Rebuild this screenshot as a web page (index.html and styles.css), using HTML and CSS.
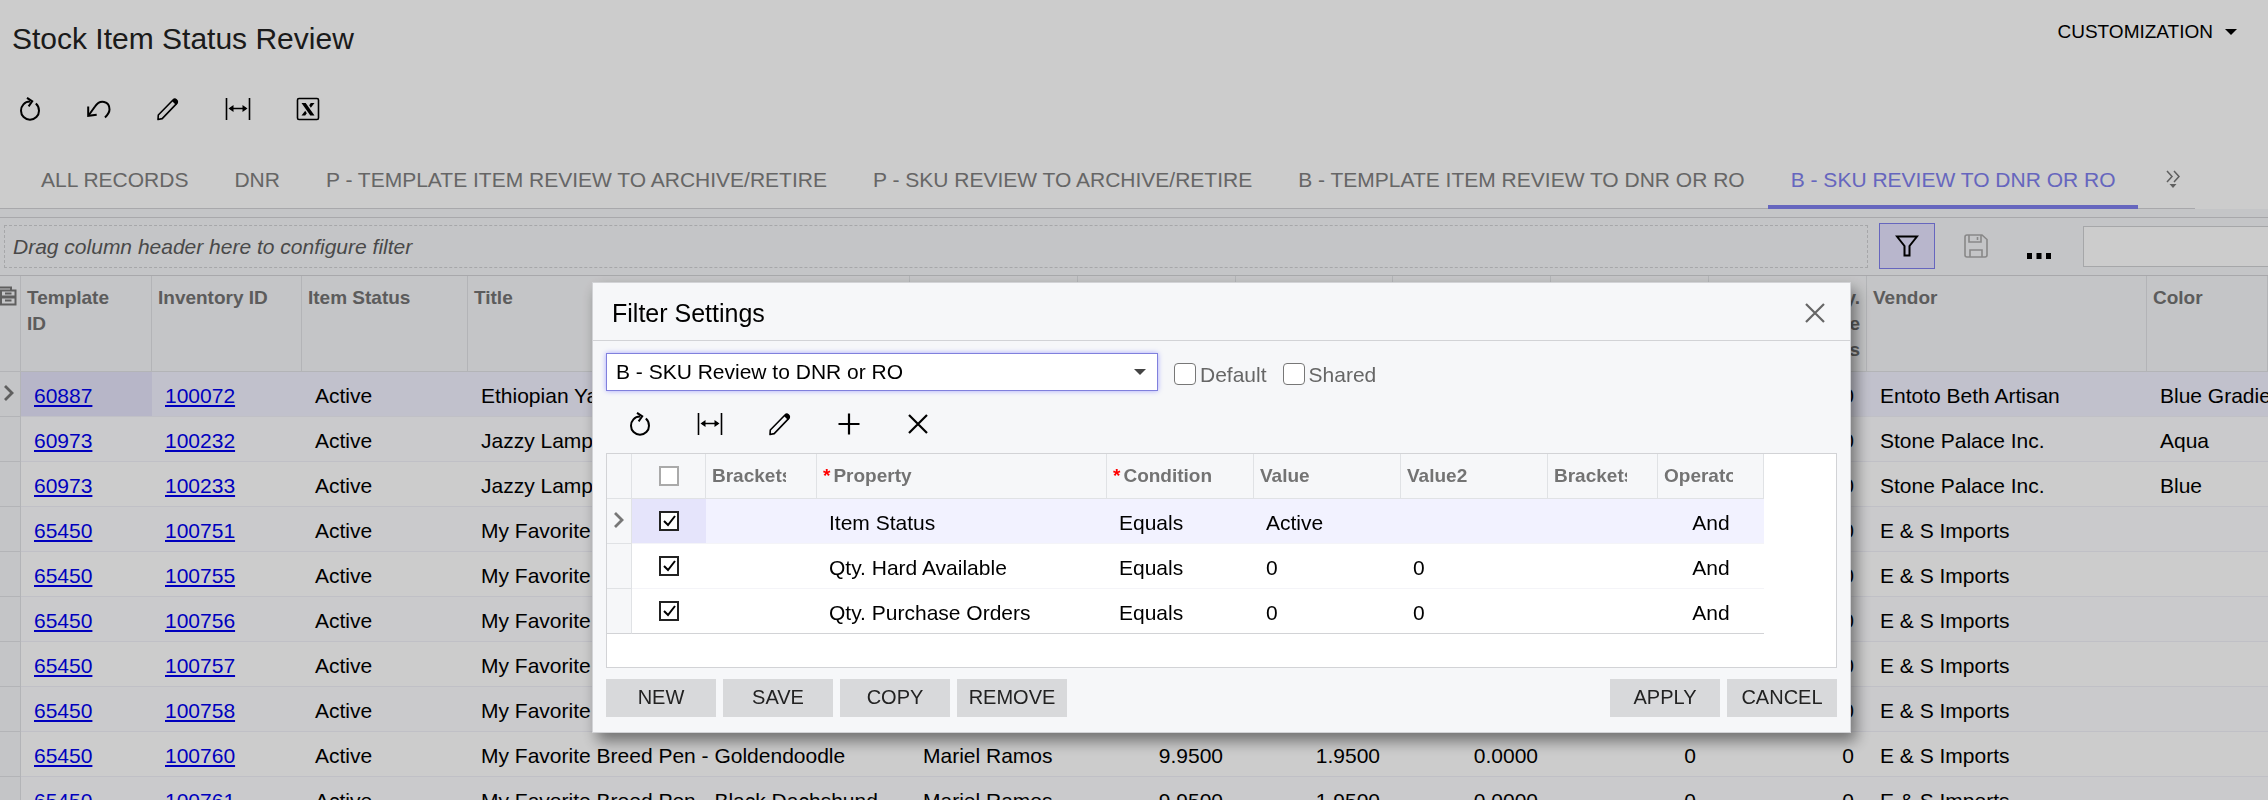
FILE: index.html
```html
<!DOCTYPE html>
<html lang="en">
<head>
  <meta charset="UTF-8" />
  <meta name="viewport" content="width=device-width, initial-scale=1" />
  <title>Stock Item Status Review</title>
  <link rel="stylesheet" href="styles.css">
</head>
<body>
  <svg class="sprite" aria-hidden="true">
    <symbol id="i-refresh" viewBox="0 0 24 24"><path d="M12 4.600C6.500 4.600 3 8.800 3 13.700c0 5 4 9 9 9s9-4 9-9c0-3-1.300-5.600-3.200-7.200" fill="none" stroke="currentColor" stroke-width="2"/><path d="M9 .8l5.200 3.500-3.600 5" fill="none" stroke="currentColor" stroke-width="2"/></symbol>
    <symbol id="i-undo" viewBox="0 0 24 24"><path d="M1.500 18.500l6.500-9C13 2 22.500 4 22.500 12.500c0 3.500-2 5.500-4.500 8" fill="none" stroke="currentColor" stroke-width="2"/><path d="M1.200 9.500v9.300l8.500-1" fill="none" stroke="currentColor" stroke-width="2"/></symbol>
    <symbol id="i-edit" viewBox="0 0 24 24"><path d="M2 22.500l.3-4.500L17 3c1.200-1.100 2.400-1 3.400 0 1.100 1.100 1.200 2.400.2 3.600L6.200 21.600z" fill="none" stroke="currentColor" stroke-width="1.600" stroke-linejoin="round"/><path d="M16 4l2.200-2 3 .8.800 3-2 2.200z" fill="currentColor"/></symbol>
    <symbol id="i-fit" viewBox="0 0 26 24"><path d="M1.500 1v22M24.500 1v22M5 11.500h16" fill="none" stroke="currentColor" stroke-width="1.600"/><path d="M3.500 11.500L8.500 8v7zM22.500 11.500L17.500 8v7z" fill="currentColor"/></symbol>
    <symbol id="i-excel" viewBox="0 0 24 24"><rect x="1.500" y="1.500" width="21" height="21" rx="1.500" fill="none" stroke="currentColor" stroke-width="1.600"/><path d="M5.500 6h4.200l8.800 12.500h-4.200zM18.500 6h-3.700l-1.600 2.300 1.600 2.500zM5.500 18.500h3.700l1.600-2.300-1.600-2.500z" fill="currentColor"/></symbol>
    <symbol id="i-plus" viewBox="0 0 24 24"><path d="M12 1.500v21M1.500 12h21" stroke="currentColor" stroke-width="2.200"/></symbol>
    <symbol id="i-cross" viewBox="0 0 24 24"><path d="M3 3l18 18M21 3L3 21" stroke="currentColor" stroke-width="2.200"/></symbol>
    <symbol id="i-arrow" viewBox="0 0 12 18"><path d="M2 2l7 7-7 7" fill="none" stroke="currentColor" stroke-width="2.800"/></symbol>
    <symbol id="i-caret" viewBox="0 0 12 6"><path d="M0 0h12L6 6z" fill="currentColor"/></symbol>
  </svg>

  <header class="page-header">
    <h1>Stock Item Status Review</h1>
    <button class="customization">CUSTOMIZATION <svg width="12" height="6"><use href="#i-caret"/></svg></button>
  </header>

  <div class="toolbar page-toolbar">
    <button aria-label="Refresh"><svg width="24" height="24"><use href="#i-refresh"/></svg></button>
    <button aria-label="Undo"><svg width="24" height="24"><use href="#i-undo"/></svg></button>
    <button aria-label="Edit"><svg width="24" height="24"><use href="#i-edit"/></svg></button>
    <button aria-label="Fit columns"><svg width="26" height="24"><use href="#i-fit"/></svg></button>
    <button aria-label="Export to Excel"><svg width="24" height="24"><use href="#i-excel"/></svg></button>
  </div>

  <nav class="tabs">
    <a href="#all">ALL RECORDS</a>
    <a href="#dnr">DNR</a>
    <a href="#p-template">P - TEMPLATE ITEM REVIEW TO ARCHIVE/RETIRE</a>
    <a href="#p-sku">P - SKU REVIEW TO ARCHIVE/RETIRE</a>
    <a href="#b-template">B - TEMPLATE ITEM REVIEW TO DNR OR RO</a>
    <a href="#b-sku" class="active">B - SKU REVIEW TO DNR OR RO</a>
    <button class="more-tabs" aria-label="More tabs"><svg width="14" height="18" viewBox="0 0 14 18"><path d="M1 1l5 5.500L1 12M8 1l5 5.500L8 12" fill="none" stroke="currentColor" stroke-width="1.500"/><path d="M3.500 14h7L7 18z" fill="currentColor"/></svg></button>
  </nav>

  <div class="filter-bar">
    <div class="drop-zone">Drag column header here to configure filter</div>
    <button class="filter-btn" aria-label="Filter settings"><svg width="24" height="24" viewBox="0 0 24 24"><path d="M2 2.500h20l-7.500 9.500v9.500h-5V12z" fill="none" stroke="currentColor" stroke-width="2"/></svg></button>
    <button class="save-btn" aria-label="Save filter"><svg width="24" height="24" viewBox="0 0 24 24"><path d="M3 1h15l5 4.500V21a2 2 0 0 1-2 2H3a2 2 0 0 1-2-2V3a2 2 0 0 1 2-2zM5 1v7h12V1M13.500 3v3M6 23v-7h12v7" fill="none" stroke="currentColor" stroke-width="1.600"/></svg></button>
    <button class="dots-btn" aria-label="More actions"><svg width="24" height="6" viewBox="0 0 24 6"><path d="M0 0h5v6H0zM9.500 0h5v6h-5zM19 0h5v6h-5z" fill="currentColor"/></svg></button>
    <input class="search" type="text" aria-label="Search">
  </div>

  <table class="grid items">
    <colgroup>
      <col class="w-mark"><col class="w-tpl"><col class="w-inv"><col class="w-status"><col class="w-title"><col class="w-artist">
      <col class="w-num"><col class="w-avg"><col class="w-num"><col class="w-num"><col class="w-num"><col class="w-vendor"><col>
    </colgroup>
    <thead>
      <tr>
        <th class="mark"><svg width="17" height="20" viewBox="0 0 17 20"><path d="M0 1.500h11v3M1 4.500h14.500v14H1zM1 11.500h14.500M1 10.500h14.500M5 7.500h6.500M5 14.500h6.500" fill="none" stroke="currentColor" stroke-width="2"/></svg></th>
        <th>Template ID</th>
        <th>Inventory ID</th>
        <th>Item Status</th>
        <th>Title</th>
        <th>Artist</th>
        <th class="num">Price</th>
        <th class="num">Last Cost</th>
        <th class="num">Average Cost</th>
        <th class="num">Qty. Hard Available</th>
        <th class="num">Qty. Purchase Orders</th>
        <th>Vendor</th>
        <th>Color</th>
      </tr>
    </thead>
    <tbody>
      <tr class="selected"><td class="mark"><svg width="12" height="18"><use href="#i-arrow"/></svg></td><td><a href="#60887">60887</a></td><td><a href="#100072">100072</a></td><td>Active</td><td>Ethiopian Yarn Necklace</td><td></td><td class="num">9.9500</td><td class="num">1.9500</td><td class="num">0.0000</td><td class="num">0</td><td class="num">0</td><td>Entoto Beth Artisan</td><td>Blue Gradient</td></tr>
      <tr><td class="mark"></td><td><a href="#60973">60973</a></td><td><a href="#100232">100232</a></td><td>Active</td><td>Jazzy Lampwork Earrings</td><td></td><td class="num">9.9500</td><td class="num">1.9500</td><td class="num">0.0000</td><td class="num">0</td><td class="num">0</td><td>Stone Palace Inc.</td><td>Aqua</td></tr>
      <tr><td class="mark"></td><td><a href="#60973">60973</a></td><td><a href="#100233">100233</a></td><td>Active</td><td>Jazzy Lampwork Earrings</td><td></td><td class="num">9.9500</td><td class="num">1.9500</td><td class="num">0.0000</td><td class="num">0</td><td class="num">0</td><td>Stone Palace Inc.</td><td>Blue</td></tr>
      <tr><td class="mark"></td><td><a href="#65450">65450</a></td><td><a href="#100751">100751</a></td><td>Active</td><td>My Favorite Breed Pen</td><td>Mariel Ramos</td><td class="num">9.9500</td><td class="num">1.9500</td><td class="num">0.0000</td><td class="num">0</td><td class="num">0</td><td>E &amp; S Imports</td><td></td></tr>
      <tr><td class="mark"></td><td><a href="#65450">65450</a></td><td><a href="#100755">100755</a></td><td>Active</td><td>My Favorite Breed Pen</td><td>Mariel Ramos</td><td class="num">9.9500</td><td class="num">1.9500</td><td class="num">0.0000</td><td class="num">0</td><td class="num">0</td><td>E &amp; S Imports</td><td></td></tr>
      <tr><td class="mark"></td><td><a href="#65450">65450</a></td><td><a href="#100756">100756</a></td><td>Active</td><td>My Favorite Breed Pen</td><td>Mariel Ramos</td><td class="num">9.9500</td><td class="num">1.9500</td><td class="num">0.0000</td><td class="num">0</td><td class="num">0</td><td>E &amp; S Imports</td><td></td></tr>
      <tr><td class="mark"></td><td><a href="#65450">65450</a></td><td><a href="#100757">100757</a></td><td>Active</td><td>My Favorite Breed Pen</td><td>Mariel Ramos</td><td class="num">9.9500</td><td class="num">1.9500</td><td class="num">0.0000</td><td class="num">0</td><td class="num">0</td><td>E &amp; S Imports</td><td></td></tr>
      <tr><td class="mark"></td><td><a href="#65450">65450</a></td><td><a href="#100758">100758</a></td><td>Active</td><td>My Favorite Breed Pen</td><td>Mariel Ramos</td><td class="num">9.9500</td><td class="num">1.9500</td><td class="num">0.0000</td><td class="num">0</td><td class="num">0</td><td>E &amp; S Imports</td><td></td></tr>
      <tr><td class="mark"></td><td><a href="#65450">65450</a></td><td><a href="#100760">100760</a></td><td>Active</td><td>My Favorite Breed Pen - Goldendoodle</td><td>Mariel Ramos</td><td class="num">9.9500</td><td class="num">1.9500</td><td class="num">0.0000</td><td class="num">0</td><td class="num">0</td><td>E &amp; S Imports</td><td></td></tr>
      <tr><td class="mark"></td><td><a href="#65450">65450</a></td><td><a href="#100761">100761</a></td><td>Active</td><td>My Favorite Breed Pen - Black Dachshund</td><td>Mariel Ramos</td><td class="num">9.9500</td><td class="num">1.9500</td><td class="num">0.0000</td><td class="num">0</td><td class="num">0</td><td>E &amp; S Imports</td><td></td></tr>
    </tbody>
  </table>

  <div class="overlay">
    <section class="dialog" role="dialog" aria-labelledby="dialog-title">
      <div class="dialog-header">
        <h2 id="dialog-title">Filter Settings</h2>
        <button class="close" aria-label="Close"><svg width="24" height="24"><use href="#i-cross"/></svg></button>
      </div>
      <div class="dialog-body">
        <div class="filter-row">
          <div class="select-wrap">
            <select aria-label="Filter">
              <option>B - SKU Review to DNR or RO</option>
            </select>
            <svg width="12" height="6"><use href="#i-caret"/></svg>
          </div>
          <div class="check"><input type="checkbox" id="default"><label for="default">Default</label></div>
          <div class="check"><input type="checkbox" id="shared"><label for="shared">Shared</label></div>
        </div>

        <div class="toolbar dialog-toolbar">
          <button aria-label="Refresh"><svg width="24" height="24"><use href="#i-refresh"/></svg></button>
          <button aria-label="Fit columns"><svg width="26" height="24"><use href="#i-fit"/></svg></button>
          <button aria-label="Edit"><svg width="24" height="24"><use href="#i-edit"/></svg></button>
          <button aria-label="Add row"><svg width="24" height="24"><use href="#i-plus"/></svg></button>
          <button aria-label="Delete row"><svg width="24" height="24"><use href="#i-cross"/></svg></button>
        </div>

        <div class="conditions-box">
          <table class="grid conditions">
            <colgroup>
              <col class="c-mark"><col class="c-check"><col class="c-open"><col class="c-prop"><col class="c-val"><col class="c-val"><col class="c-val"><col class="c-close"><col class="c-op">
            </colgroup>
            <thead>
              <tr>
                <th class="mark"></th>
                <th class="center"><input type="checkbox" class="box" aria-label="Select all"></th>
                <th><div class="clip">Brackets</div></th>
                <th><span class="req">*</span>Property</th>
                <th><span class="req">*</span>Condition</th>
                <th>Value</th>
                <th>Value2</th>
                <th><div class="clip">Brackets</div></th>
                <th><div class="clip">Operator</div></th>
              </tr>
            </thead>
            <tbody>
              <tr class="selected"><td class="mark"><svg width="12" height="18"><use href="#i-arrow"/></svg></td><td class="tick"><input type="checkbox" class="box" aria-label="Item Status active" checked></td><td></td><td>Item Status</td><td>Equals</td><td>Active</td><td></td><td></td><td class="center">And</td></tr>
              <tr><td class="mark"></td><td class="tick"><input type="checkbox" class="box" aria-label="Qty. Hard Available active" checked></td><td></td><td>Qty. Hard Available</td><td>Equals</td><td>0</td><td>0</td><td></td><td class="center">And</td></tr>
              <tr><td class="mark"></td><td class="tick"><input type="checkbox" class="box" aria-label="Qty. Purchase Orders active" checked></td><td></td><td>Qty. Purchase Orders</td><td>Equals</td><td>0</td><td>0</td><td></td><td class="center">And</td></tr>
            </tbody>
          </table>
        </div>

        <div class="dialog-footer">
          <button>NEW</button>
          <button>SAVE</button>
          <button>COPY</button>
          <button>REMOVE</button>
          <button class="push">APPLY</button>
          <button>CANCEL</button>
        </div>
      </div>
    </section>
  </div>
</body>
</html>
```

FILE: styles.css
```css
* {
  box-sizing: border-box;
}
html {
  height: 100%;
  overflow: hidden;
}
body {
  margin: 0;
  height: 100%;
  overflow: hidden;
  background: #fff;
  color: #000;
  font-family: Arial, "Liberation Sans", sans-serif;
  font-size: 21px;
}
button, input, select {
  font: inherit;
  color: inherit;
}
button {
  padding: 0;
  border: 0;
  background: none;
  cursor: pointer;
}
svg {
  display: block;
}
.sprite {
  position: absolute;
  width: 0;
  height: 0;
}

/* page header */
.page-header {
  display: flex;
  justify-content: space-between;
  align-items: flex-start;
  height: 76px;
  padding: 21px 31px 0 12px;
}
h1 {
  margin: 0;
  font-size: 30px;
  line-height: 36px;
  font-weight: normal;
  color: #222;
}
.customization {
  display: flex;
  align-items: center;
  gap: 12px;
  font-size: 19px;
  line-height: 22px;
}
.toolbar {
  display: flex;
  align-items: center;
  gap: 45px;
}
.page-toolbar {
  height: 66px;
  padding-left: 18px;
}

/* tabs */
.tabs {
  display: flex;
  height: 67px;
  margin-right: 73px;
  padding: 8px 0 0 18px;
  border-bottom: 1px solid #d2d3d6;
}
.tabs a {
  height: 59px;
  padding: 0 23px;
  line-height: 60px;
  white-space: nowrap;
  text-decoration: none;
  color: #808080;
  border-bottom: 4px solid transparent;
}
.tabs a.active {
  color: #8080ee;
  border-color: #8080ee;
}
.more-tabs {
  padding: 0 28px;
  color: #777;
}

/* filter bar */
.filter-bar {
  display: flex;
  align-items: center;
  height: 67px;
  padding: 8px 0 0 4px;
  background: linear-gradient(#d2d3d6, #d2d3d6) 0 8px / 100% 1px no-repeat #f6f7f9;
  border-bottom: 1px solid #d2d3d6;
}
.drop-zone {
  flex: 1;
  height: 43px;
  padding-left: 8px;
  border: 1px dashed #d0d1d4;
  line-height: 41px;
  font-style: italic;
  color: #5c5c5c;
}
.filter-btn {
  display: flex;
  justify-content: center;
  align-items: center;
  width: 56px;
  height: 46px;
  margin-left: 11px;
  background: #e6e4ff;
  border: 1px solid #8080ee;
}
.save-btn {
  margin-left: 29px;
  color: #aaa;
}
.dots-btn {
  align-self: flex-end;
  margin: 0 32px 16px 39px;
}
.search {
  width: 185px;
  height: 41px;
  background: #fff;
  border: 1px solid #d0d1d4;
  border-right: 0;
}

/* grids */
.grid {
  border-collapse: separate;
  border-spacing: 0;
  table-layout: fixed;
}
.grid th {
  padding: 9px 31px 0 6px;
  background: #f6f7f9;
  border-right: 1px solid #e0e2e5;
  border-bottom: 1px solid #e0e2e5;
  font-size: 19px;
  line-height: 26px;
  text-align: left;
  vertical-align: top;
  color: #737373;
}
.grid td {
  height: 45px;
  padding: 3px 13px 0;
  border-bottom: 1px solid #f4f4f8;
  white-space: nowrap;
  overflow: hidden;
}
.grid .num {
  text-align: right;
}
.grid th.num {
  padding: 9px 6px 0 60px;
}
.grid .center {
  text-align: center;
}
.grid .mark {
  padding: 0 0 2px 3px;
  background: #f6f7f9;
  border-right: 1px solid #e0e2e5;
  border-bottom: 1px solid #e0e2e5;
  color: #777;
}
.grid .selected td {
  background: #f2f2ff;
}
.grid .selected .mark {
  background: #f6f7f9;
}
.grid .selected .mark + td {
  background: #e5e4fb;
}

.items {
  width: 100%;
}
.items th {
  height: 96px;
}
.items thead .mark {
  padding: 10px 0 0;
}
.items tbody td {
  border-bottom-color: #f0f0f8;
}
.items tbody tr:nth-child(even) {
  background: #fdfdff;
}
.items a {
  color: #0000ee;
}
.w-mark { width: 21px; }
.w-tpl { width: 131px; }
.w-inv { width: 150px; }
.w-status { width: 166px; }
.w-title { width: 442px; }
.w-artist { width: 168px; }
.w-num { width: 158px; }
.w-avg { width: 157px; }
.w-vendor { width: 280px; }

/* dialog */
.overlay {
  position: fixed;
  inset: 0;
  padding: 282px 417px 0 592px;
  background: rgba(0, 0, 0, 0.2);
}
.dialog {
  background: #f6f7f9;
  border: 1px solid #d2d3d6;
  box-shadow: 5px 8px 14px rgba(0, 0, 0, 0.45);
}
.dialog-header {
  display: flex;
  justify-content: space-between;
  align-items: center;
  height: 58px;
  padding: 3px 23px 0 19px;
  border-bottom: 1px solid #d2d3d6;
}
h2 {
  margin: 0;
  font-size: 25px;
  font-weight: normal;
}
.close {
  color: #666;
}
.dialog-body {
  padding: 12px 13px 15px;
}
.filter-row {
  display: flex;
}
.select-wrap {
  position: relative;
  width: 552px;
}
.select-wrap select {
  display: block;
  width: 100%;
  height: 38px;
  padding: 0 9px 2px;
  appearance: none;
  background: #fff;
  border: 1px solid #8080dd;
  border-radius: 0;
  box-shadow: 0 0 5px #a8a8ff;
}
.select-wrap svg {
  position: absolute;
  right: 12px;
  top: 16px;
  color: #444;
}
.check {
  display: flex;
  align-items: center;
  gap: 4px;
  margin-left: 16px;
  padding-top: 3px;
  color: #666;
}
.check label {
  padding-top: 3px;
}
.check input {
  appearance: none;
  width: 22px;
  height: 22px;
  margin: 0;
  background: #fff;
  border: 1px solid #777;
  border-radius: 4px;
}
.dialog-toolbar {
  height: 62px;
  padding: 4px 0 0 22px;
}
.conditions-box {
  height: 215px;
  background: #fff;
  border: 1px solid #d2d3d6;
}
.conditions {
  width: 1157px;
}
.conditions th {
  height: 45px;
  padding: 0 6px;
  vertical-align: middle;
  white-space: nowrap;
}
.conditions td {
  padding: 4px 12px 0;
}
.conditions .mark {
  padding: 0 0 2px 6px;
}
.conditions .tick {
  padding: 0;
}
.conditions tr:last-child td {
  border-bottom-color: #d2d3d6;
}
.clip {
  margin-right: 24px;
  overflow: hidden;
}
.req {
  margin-right: 3px;
  color: #ff0000;
}
.box {
  display: block;
  appearance: none;
  width: 20px;
  height: 20px;
  margin: 0 auto;
  background: #fff;
  border: 2px solid #aaa;
}
.box:checked {
  border-color: #222;
  background: url("data:image/svg+xml,%3Csvg xmlns='http://www.w3.org/2000/svg' viewBox='0 0 16 16'%3E%3Cpath d='M3 8l4 4 7-9' fill='none' stroke='%23000' stroke-width='2'/%3E%3C/svg%3E") #fff;
}
.c-mark { width: 25px; }
.c-check { width: 74px; }
.c-open { width: 111px; }
.c-prop { width: 290px; }
.c-val { width: 147px; }
.c-close { width: 110px; }
.c-op { width: 106px; }

.dialog-footer {
  display: flex;
  gap: 7px;
  padding-top: 11px;
}
.dialog-footer button {
  width: 110px;
  height: 38px;
  padding-bottom: 2px;
  background: #d8d9db;
  font-size: 20px;
  color: #222;
}
.dialog-footer .push {
  margin-left: auto;
}
```
